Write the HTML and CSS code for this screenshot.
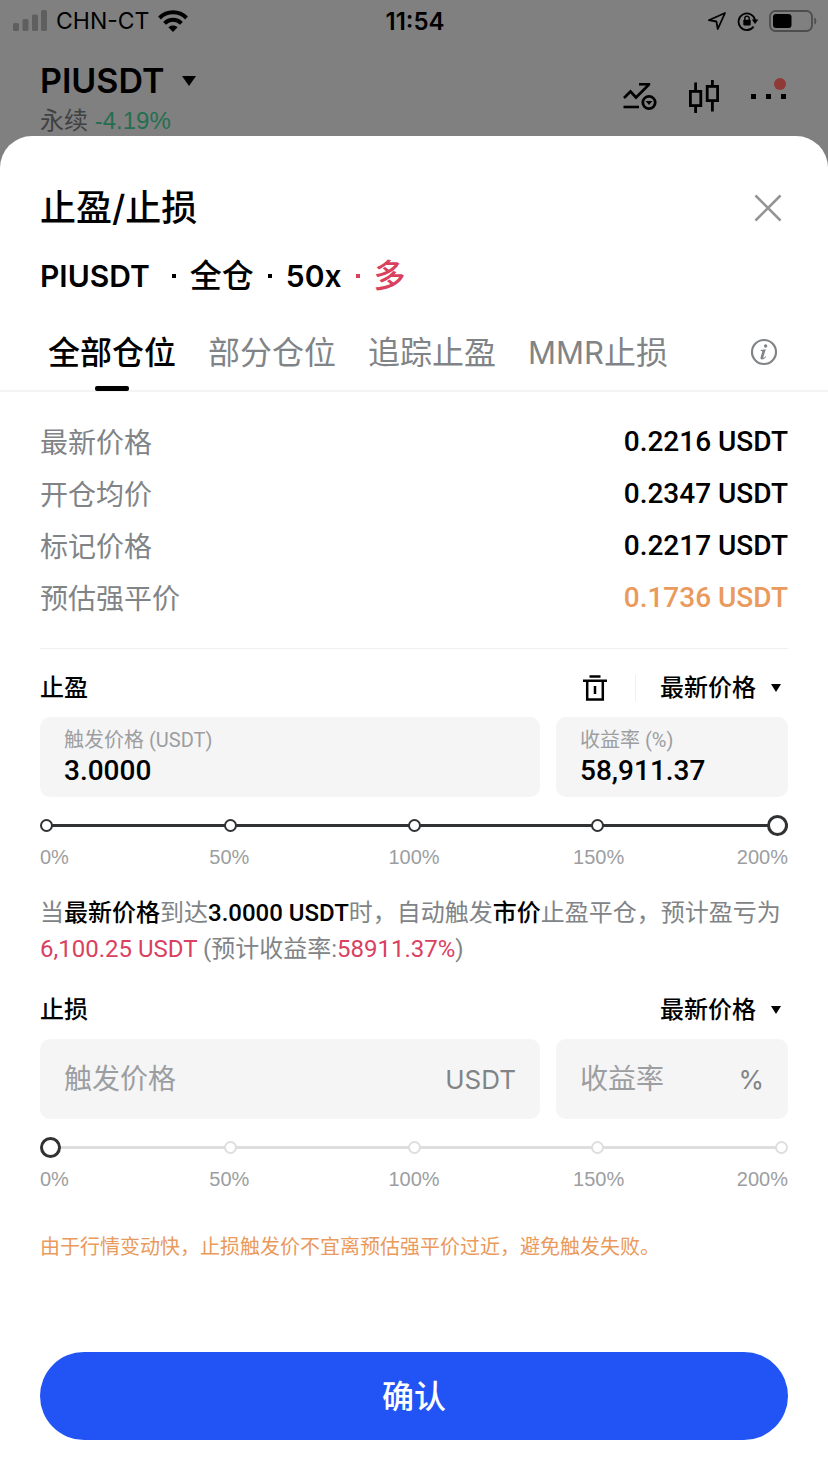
FILE: index.html
```html
<!DOCTYPE html>
<html lang="zh-CN">
<head>
<meta charset="utf-8">
<meta name="viewport" content="width=device-width, initial-scale=1">
<title>止盈/止损</title>
<link rel="stylesheet" href="styles.css">
</head>
<body>
<div class="status-bar">
  <div class="status-side">
    <svg class="signal" width="34" height="22" viewBox="0 0 34 22" aria-hidden="true"><g fill="#5f5f5f"><rect x="0" y="13" width="6" height="8" rx="1.5"/><rect x="9.500" y="9" width="6" height="12" rx="1.500"/><rect x="19" y="4.500" width="6" height="16.500" rx="1.500"/><rect x="28" y="0" width="6" height="21" rx="1.500"/></g></svg>
    <span class="carrier">CHN-CT</span>
    <svg class="wifi" width="30" height="22" viewBox="0 0 30 22" aria-hidden="true"><g fill="none" stroke="#000" stroke-width="4"><path d="M1.500 8C9 .4 21 .4 28.500 8"/><path d="M6.600 13.300c4.700-4.700 12.100-4.700 16.800 0"/></g><path d="M10.400 17.200c2.600-2.400 6.600-2.400 9.200 0L15 22z"/></svg>
  </div>
  <time class="clock">11:54</time>
  <div class="status-side status-right">
    <svg width="20" height="20" viewBox="0 0 20 20" aria-hidden="true"><path d="M18 2L1.800 9.200l7.600 1.300L10.800 18z" fill="none" stroke="#000" stroke-width="1.800" stroke-linejoin="round"/></svg>
    <svg width="22" height="20" viewBox="0 0 22 20" aria-hidden="true"><path d="M16.600 15.600A8.300 8.300 0 1 1 18 9" fill="none" stroke="#000" stroke-width="1.800"/><path d="M14.800 8.600h6.600L18 13z"/><rect x="6.300" y="8.800" width="7.400" height="5.600" rx=".8"/><path d="M7.800 9V7.300a2.200 2.200 0 0 1 4.400 0V9" fill="none" stroke="#000" stroke-width="1.400"/></svg>
    <svg width="48" height="22" viewBox="0 0 48 22" aria-hidden="true"><rect x="1" y="1" width="42" height="20" rx="5.500" fill="none" stroke="#4d4d4d" stroke-width="1.800"/><rect x="4" y="4" width="18.500" height="14" rx="3"/><path d="M45.300 7.500c2.700 1 2.700 6 0 7z" fill="#4d4d4d"/></svg>
  </div>
</div>

<header class="page-head">
  <div class="pair">
    <button class="pair-name" type="button">PIUSDT
      <svg width="14" height="10" viewBox="0 0 14 10" aria-hidden="true"><path d="M0 0h14L7 10z"/></svg>
    </button>
    <p class="pair-sub">永续 <span class="change">-4.19%</span></p>
  </div>
  <div class="head-actions">
    <button class="icon-btn" type="button" aria-label="图表工具">
      <svg width="36" height="34" viewBox="0 0 36 34"><g fill="none" stroke="#000" stroke-width="2.600"><path d="M2 18l6.500-6.500 5.500 6L26.500 5"/><path d="M17 4.300h11.200"/><path d="M1.500 27H17"/><circle cx="27" cy="22.500" r="6.200" stroke-width="2.800"/></g><path d="M23.600 21h6.800L27 25z"/></svg>
    </button>
    <button class="icon-btn" type="button" aria-label="K线">
      <svg width="32" height="34" viewBox="0 0 32 34"><g fill="none" stroke="#000" stroke-width="2.800"><rect x="2.400" y="11.400" width="10.400" height="14.200"/><path d="M7.600 2.500v9M7.600 25.600V33"/><rect x="19.200" y="6.400" width="10.400" height="14.200"/><path d="M24.400 0v6.400M24.400 20.600v11"/></g></svg>
    </button>
    <button class="icon-btn more" type="button" aria-label="更多">
      <svg width="38" height="34" viewBox="0 0 38 34"><path d="M1 14h5v5H1zM16 14h5v5h-5zM31 14h5v5h-5z"/></svg>
      <span class="badge"></span>
    </button>
  </div>
</header>

<main class="sheet">
  <div class="title-row">
    <h1 class="title">止盈/止损</h1>
    <button class="icon-btn" type="button" aria-label="关闭">
      <svg width="40" height="40" viewBox="0 0 40 40"><path d="M7.500 7.500l25 25M32.500 7.500l-25 25" fill="none" stroke="#949494" stroke-width="2.600"/></svg>
    </button>
  </div>
  <p class="position"><span class="latin symbol">PIUSDT</span><i class="dot"></i>全仓<i class="dot"></i><span class="latin">50x</span><i class="dot dot-red"></i><span class="long">多</span></p>

  <nav class="tabs">
    <button class="tab tab-on" type="button">全部仓位</button>
    <button class="tab" type="button">部分仓位</button>
    <button class="tab" type="button">追踪止盈</button>
    <button class="tab" type="button"><span class="latin">MMR</span>止损</button>
    <button class="icon-btn info" type="button" aria-label="说明">
      <svg width="28" height="28" viewBox="0 0 28 28"><circle cx="14" cy="14" r="12" fill="none" stroke="#818487" stroke-width="2.200"/><circle cx="15.600" cy="8" r="1.700" fill="#818487"/><path d="M10.800 12l5-.8-2.500 8c-.2.900.4.900 2.300-1l.5.500c-2.600 3.600-6.400 3.600-5.500.5l1.600-5.300c.2-.8 0-1-1.500-1z" fill="#818487"/></svg>
    </button>
  </nav>

  <dl class="prices">
    <div class="price"><dt>最新价格</dt><dd>0.2216 USDT</dd></div>
    <div class="price"><dt>开仓均价</dt><dd>0.2347 USDT</dd></div>
    <div class="price"><dt>标记价格</dt><dd>0.2217 USDT</dd></div>
    <div class="price"><dt>预估强平价</dt><dd class="warn">0.1736 USDT</dd></div>
  </dl>

  <section class="block block-first">
    <div class="block-head">
      <h2 class="block-title">止盈</h2>
      <button class="icon-btn trash" type="button" aria-label="清除">
        <svg width="24" height="26" viewBox="0 0 24 26"><g fill="none" stroke="#000" stroke-width="2.500"><path d="M6.500 1.500h11M0 5.800h24"/><path d="M4.200 6v18.500h15.600V6"/><path d="M12 11v8"/></g></svg>
      </button>
      <span class="picker">
        <select class="picker-select" aria-label="止盈触发类型"><option>最新价格</option></select>
        <svg class="picker-caret" width="10" height="8" viewBox="0 0 10 8" aria-hidden="true"><path d="M0 0h10L5 8z"/></svg>
      </span>
    </div>
    <div class="fields">
      <div class="field field-filled">
        <label class="field-label" for="tp-price">触发价格 (USDT)</label>
        <input class="field-input" id="tp-price" type="text" value="3.0000">
      </div>
      <div class="field field-filled">
        <label class="field-label" for="tp-rate">收益率 (%)</label>
        <input class="field-input" id="tp-rate" type="text" value="58,911.37">
      </div>
    </div>
    <div class="slider slider-on">
      <div class="stops" aria-hidden="true"><i></i><i></i><i></i><i></i><i></i></div>
      <input class="range" type="range" min="0" max="200" value="200" aria-label="止盈收益率">
    </div>
    <div class="scale"><span>0%</span><span>50%</span><span>100%</span><span>150%</span><span>200%</span></div>
    <p class="summary">当<b>最新价格</b>到达<b>3.0000 USDT</b>时，自动触发<b>市价</b>止盈平仓，预计盈亏为<br><span class="red">6,100.25 USDT</span> (预计收益率:<span class="red">58911.37%</span>)</p>
  </section>

  <section class="block">
    <div class="block-head">
      <h2 class="block-title">止损</h2>
      <span class="picker">
        <select class="picker-select" aria-label="止损触发类型"><option>最新价格</option></select>
        <svg class="picker-caret" width="10" height="8" viewBox="0 0 10 8" aria-hidden="true"><path d="M0 0h10L5 8z"/></svg>
      </span>
    </div>
    <div class="fields">
      <label class="field">
        <input class="field-input" type="text" placeholder="触发价格" aria-label="止损触发价格">
        <span class="unit">USDT</span>
      </label>
      <label class="field">
        <input class="field-input" type="text" placeholder="收益率" aria-label="止损收益率">
        <span class="unit">%</span>
      </label>
    </div>
    <div class="slider">
      <div class="stops" aria-hidden="true"><i></i><i></i><i></i><i></i><i></i></div>
      <input class="range" type="range" min="0" max="200" value="0" aria-label="止损收益率滑块">
    </div>
    <div class="scale"><span>0%</span><span>50%</span><span>100%</span><span>150%</span><span>200%</span></div>
  </section>

  <p class="notice">由于行情变动快，止损触发价不宜离预估强平价过近，避免触发失败。</p>
  <button class="confirm" type="button">确认</button>
</main>
</body>
</html>
```
FILE: styles.css
```css
* { box-sizing: border-box; }

body {
  margin: 0;
  min-height: 100vh;
  display: flex;
  flex-direction: column;
  background: #808080;
  color: #000;
  font-family: Inter, "Noto Sans CJK SC", sans-serif;
}

h1, h2, p, dl, dd { margin: 0; }

button, input, select { font: inherit; color: inherit; }

button {
  padding: 0;
  border: 0;
  background: none;
}

svg { display: block; }

.icon-btn { display: flex; flex: none; }

/* Status bar */
.status-bar {
  display: flex;
  align-items: center;
  height: 42px;
  padding: 0 11px 0 13px;
}
.status-side {
  flex: 1;
  display: flex;
  align-items: center;
  gap: 9px;
}
.status-right { justify-content: flex-end; gap: 10px; }
.carrier { font-size: 23px; font-weight: 400; }
.clock { font-size: 24px; font-weight: 600; }

/* Dimmed page header */
.page-head {
  display: flex;
  justify-content: space-between;
  height: 94px;
  padding: 18px 40px 0;
}
.pair-name {
  display: flex;
  align-items: center;
  gap: 18px;
  font-size: 34px;
  font-weight: 600;
  line-height: 42px;
}
.pair-sub {
  color: #404143;
  font-size: 24px;
  line-height: 38px;
}
.change {
  color: #256f50;
  font-family: "Liberation Sans", Arial, sans-serif;
}
.head-actions {
  display: flex;
  gap: 30px;
  padding-top: 20px;
}
.more { position: relative; }
.badge {
  position: absolute;
  top: -2px;
  right: 2px;
  width: 12px;
  height: 12px;
  border-radius: 50%;
  background: #8f3a36;
}

/* Bottom sheet */
.sheet {
  flex: 1;
  display: flex;
  flex-direction: column;
  padding: 48px 40px 32px;
  border-radius: 32px 32px 0 0;
  background: #fff;
}
.title-row {
  display: flex;
  align-items: center;
  justify-content: space-between;
  height: 48px;
}
.title { font-size: 36px; font-weight: 500; line-height: 48px; }
.position {
  display: flex;
  align-items: center;
  margin-top: 24px;
  font-size: 32px;
  font-weight: 500;
  line-height: 40px;
}
.position .latin { font-size: 30px; font-weight: 600; }
.symbol { margin-right: 8px; }
.latin { font-size: 31px; }
.dot {
  width: 4px;
  height: 4px;
  margin: 0 14px;
  background: #000;
}
.dot-red { background: #d9415f; }
.long { color: #d9415f; }

.tabs {
  display: flex;
  align-items: center;
  gap: 32px;
  height: 72px;
  margin: 24px -40px 0;
  padding: 0 50px 0 48px;
  border-bottom: 2px solid #f3f3f3;
}
.tab {
  position: relative;
  height: 72px;
  padding-bottom: 10px;
  color: #818487;
  font-size: 32px;
}
.tab-on { color: #000; font-weight: 500; }
.tab-on::after {
  content: "";
  position: absolute;
  left: 50%;
  bottom: 0;
  width: 34px;
  height: 5px;
  margin-left: -17px;
  border-radius: 2px;
  background: #000;
}
.info { margin-left: auto; padding-bottom: 6px; }

.prices {
  padding: 23px 0 25px;
  border-bottom: 1px solid #f0f0f0;
}
.price {
  display: flex;
  align-items: center;
  justify-content: space-between;
  height: 52px;
  font-size: 28px;
}
.price dt { color: #818487; }
.price dd { font-family: Roboto, sans-serif; font-weight: 500; }
.price .warn { color: #ea9a5c; }

/* Take-profit and stop-loss blocks */
.block { margin-top: 25px; }
.block-first { margin-top: 21px; }
.block-head {
  display: flex;
  align-items: center;
  height: 36px;
  margin-bottom: 11px;
}
.block-title {
  margin-right: auto;
  font-size: 24px;
  font-weight: 500;
  line-height: 36px;
}
.trash {
  padding-right: 28px;
  margin-right: 24px;
  border-right: 1px solid #eee;
}
.picker { position: relative; }
.picker-select {
  display: block;
  appearance: none;
  height: 36px;
  padding: 0 32px 0 0;
  border: 0;
  background: none;
  font-size: 24px;
  font-weight: 500;
  line-height: 36px;
}
.picker-caret {
  position: absolute;
  top: 14px;
  right: 7px;
  pointer-events: none;
}

.fields {
  display: grid;
  grid-template-columns: minmax(0, 1fr) 232px;
  gap: 16px;
}
.field {
  display: flex;
  align-items: center;
  height: 80px;
  padding: 0 24px;
  border-radius: 10px;
  background: #f5f5f5;
}
.field-filled {
  flex-direction: column;
  align-items: stretch;
  justify-content: center;
  padding-bottom: 2px;
}
.field-label {
  color: #9c9ea1;
  font-family: Roboto, "Noto Sans CJK SC", sans-serif;
  font-size: 20px;
  line-height: 28px;
}
.field-input {
  flex: 1;
  width: 100%;
  min-width: 0;
  padding: 0;
  border: 0;
  outline: 0;
  background: none;
  font-family: Roboto, "Noto Sans CJK SC", sans-serif;
  font-size: 28px;
}
.field-filled .field-input {
  flex: none;
  height: 32px;
  font-weight: 500;
}
.field-input::placeholder { color: #9c9ea1; opacity: 1; }
.unit { color: #818487; font-size: 26px; }

.slider {
  --line: #dedede;
  position: relative;
  height: 24px;
  margin-top: 16px;
}
.slider-on { --line: #303234; }
.stops {
  display: flex;
  align-items: center;
  justify-content: space-between;
  height: 24px;
  background: linear-gradient(var(--line), var(--line)) center / calc(100% - 12px) 3px no-repeat;
}
.stops i {
  width: 13px;
  height: 13px;
  border: 2px solid var(--line);
  border-radius: 50%;
  background: #fff;
}
.range {
  appearance: none;
  position: absolute;
  inset: 0;
  width: 100%;
  height: 24px;
  margin: 0;
  background: none;
}
.range::-webkit-slider-thumb {
  appearance: none;
  width: 21px;
  height: 21px;
  border: 3px solid #303234;
  border-radius: 50%;
  background: #fff;
}
.scale {
  display: grid;
  grid-template-columns: 97px 1fr 1fr 1fr 97px;
  margin-top: 8px;
  color: #9c9ea1;
  font-family: "Liberation Sans", Arial, sans-serif;
  font-size: 20px;
  line-height: 24px;
  text-align: center;
}
.scale span:first-child { text-align: left; }
.scale span:last-child { text-align: right; }

.summary {
  margin-top: 26px;
  color: #818487;
  font-family: Roboto, "Noto Sans CJK SC", sans-serif;
  font-size: 24px;
  line-height: 36px;
}
.summary b { color: #000; font-weight: 500; }
.red { color: #d9415f; }

.notice {
  margin-top: 40px;
  color: #ea9a5c;
  font-size: 20px;
  line-height: 32px;
}
.confirm {
  height: 88px;
  margin-top: auto;
  padding-bottom: 4px;
  border-radius: 44px;
  background: #2254f5;
  color: #fff;
  font-size: 32px;
  font-weight: 500;
}
```
